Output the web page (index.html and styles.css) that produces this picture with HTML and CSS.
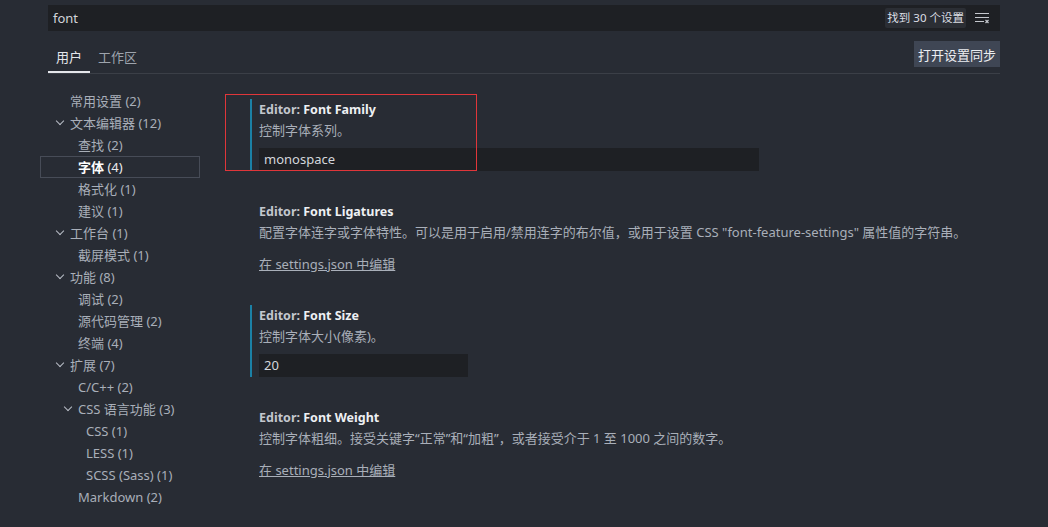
FILE: index.html
```html
<!DOCTYPE html>
<html lang="zh-CN">
<head>
<meta charset="utf-8">
<title>设置</title>
<link rel="stylesheet" href="styles.css">
</head>
<body>
<div class="page">
  <div class="search">
    <span class="search-text">font</span>
    <div class="search-tools">
      <span class="badge">找到 30 个设置</span>
      <svg class="clear-icon" width="16" height="16" viewBox="0 0 16 16" aria-hidden="true">
        <path d="M1 3.5h14M1 7.5h14M1 11.5h9" stroke="#c5c8ce" stroke-width="1" fill="none"/>
        <path d="M11.5 10l3 3M14.5 10l-3 3" stroke="#c5c8ce" stroke-width="1.2" fill="none"/>
      </svg>
    </div>
  </div>

  <div class="tabs-row">
    <div class="tabs">
      <span class="tab active">用户</span>
      <span class="tab">工作区</span>
    </div>
    <button class="sync-btn">打开设置同步</button>
  </div>

  <div class="main">
    <nav class="tree">
      <div class="row l0"><span class="chev"></span>常用设置 (2)</div>
      <div class="row l0"><span class="chev open"></span>文本编辑器 (12)</div>
      <div class="row l1"><span class="chev"></span>查找 (2)</div>
      <div class="row l1 selected"><span class="chev"></span><b>字体</b>&nbsp;(4)</div>
      <div class="row l1"><span class="chev"></span>格式化 (1)</div>
      <div class="row l1"><span class="chev"></span>建议 (1)</div>
      <div class="row l0"><span class="chev open"></span>工作台 (1)</div>
      <div class="row l1"><span class="chev"></span>截屏模式 (1)</div>
      <div class="row l0"><span class="chev open"></span>功能 (8)</div>
      <div class="row l1"><span class="chev"></span>调试 (2)</div>
      <div class="row l1"><span class="chev"></span>源代码管理 (2)</div>
      <div class="row l1"><span class="chev"></span>终端 (4)</div>
      <div class="row l0"><span class="chev open"></span>扩展 (7)</div>
      <div class="row l1"><span class="chev"></span>C/C++ (2)</div>
      <div class="row l1"><span class="chev open"></span>CSS 语言功能 (3)</div>
      <div class="row l2"><span class="chev"></span>CSS (1)</div>
      <div class="row l2"><span class="chev"></span>LESS (1)</div>
      <div class="row l2"><span class="chev"></span>SCSS (Sass) (1)</div>
      <div class="row l1"><span class="chev"></span>Markdown (2)</div>
    </nav>

    <section class="settings">
      <div class="annotation"></div>
      <div class="setting modified">
        <div class="title"><span class="cat">Editor:</span> <span class="name">Font Family</span></div>
        <div class="desc">控制字体系列。</div>
        <div class="input wide">monospace</div>
      </div>
      <div class="setting">
        <div class="title"><span class="cat">Editor:</span> <span class="name">Font Ligatures</span></div>
        <div class="desc">配置字体连字或字体特性。可以是用于启用/禁用连字的布尔值，或用于设置 CSS "font-feature-settings" 属性值的字符串。</div>
        <a class="link" href="#">在 settings.json 中编辑</a>
      </div>
      <div class="setting modified">
        <div class="title"><span class="cat">Editor:</span> <span class="name">Font Size</span></div>
        <div class="desc">控制字体大小(像素)。</div>
        <div class="input narrow">20</div>
      </div>
      <div class="setting">
        <div class="title"><span class="cat">Editor:</span> <span class="name">Font Weight</span></div>
        <div class="desc">控制字体粗细。接受关键字“正常”和“加粗”，或者接受介于 1 至 1000 之间的数字。</div>
        <a class="link" href="#">在 settings.json 中编辑</a>
      </div>
    </section>
  </div>
</div>
</body>
</html>
```

FILE: styles.css
```css
html, body {
  margin: 0;
  padding: 0;
  background: #282c34;
  height: 100%;
  overflow: hidden;
}

body {
  font-family: "Noto Sans", "Noto Sans CJK SC", sans-serif;
  font-size: 13px;
  color: #a9afb9;
}

.page {
  padding: 5px 48px 0 48px;
}

.search {
  height: 26px;
  background: #1e2024;
  display: flex;
  align-items: center;
  justify-content: space-between;
  padding: 0 10px 0 5px;
}

.search-text {
  color: #d2d5da;
  font-size: 13px;
}

.search-tools {
  display: flex;
  align-items: center;
  gap: 8px;
}

.badge {
  background: #2b2e34;
  color: #dcdfe4;
  font-size: 11.5px;
  line-height: 20px;
  padding: 0 2px;
  border-radius: 2px;
}

.clear-icon {
  display: block;
}

.tabs-row {
  display: flex;
  justify-content: space-between;
  align-items: flex-end;
  border-bottom: 1px solid #3b3f47;
  height: 42px;
}

.tabs {
  display: flex;
}

.tab {
  color: #9ea4ad;
  padding: 0 8px;
  line-height: 22px;
  height: 27px;
  box-sizing: border-box;
}

.tab.active {
  color: #e4e6ea;
  border-bottom: 2px solid #e4e6ea;
}

.sync-btn {
  align-self: center;
  margin-top: 4px;
  font: inherit;
  font-size: 13px;
  color: #eceef1;
  background: #3f4654;
  border: none;
  height: 26px;
  padding: 0 4px;
  cursor: pointer;
}

.main {
  display: flex;
  margin-left: -8px;
}

.tree {
  width: 160px;
  padding-top: 16px;
  flex: none;
}

.row {
  height: 22px;
  line-height: 22px;
  display: flex;
  align-items: center;
  white-space: nowrap;
  color: #a9afb9;
  box-sizing: border-box;
}

.row.l0 { padding-left: 14px; }
.row.l1 { padding-left: 22px; }
.row.l2 { padding-left: 30px; }

.row.selected {
  outline: 1px solid #474c57;
  outline-offset: -1px;
  color: #e8eaee;
}

.row.selected b {
  color: #ffffff;
}

.chev {
  width: 16px;
  height: 22px;
  flex: none;
}

.chev.open::before {
  content: "";
  display: block;
  width: 5px;
  height: 5px;
  border-right: 1px solid #b8bdc6;
  border-bottom: 1px solid #b8bdc6;
  transform: rotate(45deg);
  margin: 6px 0 0 3px;
}

.settings {
  position: relative;
  margin-left: 50px;
  padding-top: 25px;
  display: flex;
  flex-direction: column;
  gap: 30px;
  flex: 1;
}

.annotation {
  position: absolute;
  left: -25px;
  top: 20px;
  width: 250px;
  height: 75px;
  border: 1px solid #e0363a;
  pointer-events: none;
}

.setting {
  padding-left: 7px;
  border-left: 2px solid transparent;
}

.setting.modified {
  border-left-color: #1b81a6;
}

.title {
  line-height: 21px;
  font-weight: 700;
  font-size: 12.5px;
}

.cat {
  color: #c3c7ce;
}

.name {
  color: #eef0f3;
}

.desc {
  line-height: 21px;
  color: #a9afb9;
}

.input {
  margin-top: 7px;
  height: 23px;
  line-height: 23px;
  background: #1e2024;
  color: #d4d7dc;
  padding-left: 5px;
  box-sizing: border-box;
}

.input.wide { width: 500px; }
.input.narrow { width: 209px; }

.link {
  display: inline-block;
  margin-top: 11px;
  line-height: 21px;
  color: #a9afb9;
  text-decoration: underline;
}
```
